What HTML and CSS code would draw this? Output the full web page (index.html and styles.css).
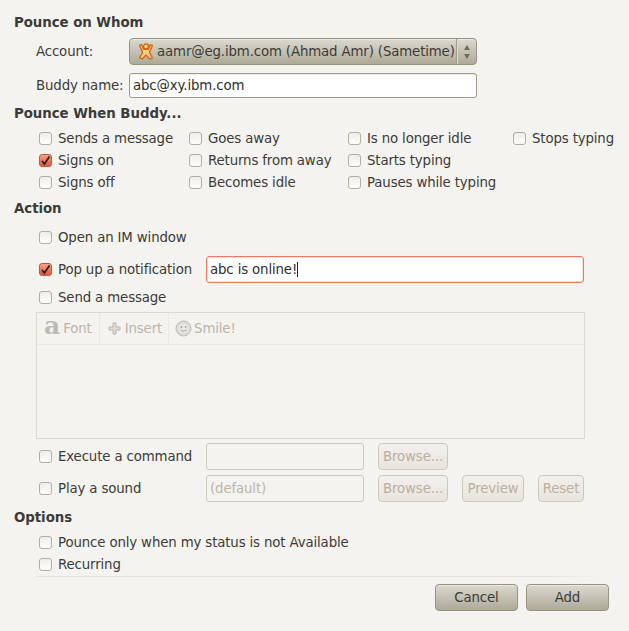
FILE: index.html
```html
<!DOCTYPE html>
<html lang="en">
<head>
    <meta charset="UTF-8">
    <title>New Buddy Pounce</title>
    <link rel="stylesheet" href="styles.css">
</head>
<body>
    <div class="dialog">
        <h2 class="heading first">Pounce on Whom</h2>
        <div class="whom">
            <span>Account:</span>
            <div class="combo btn">
                <svg class="proto" width="16" height="17" viewBox="0 0 16 17">
                    <circle cx="8" cy="3.4" r="2.4" fill="#fbd9a6" stroke="#d0680f" stroke-width="1.3"/>
                    <path d="M1.6 2.4 L3.6 1.6 L5.6 6.4 H10.4 L12.4 1.6 L14.4 2.4 L11.4 9.4 L14.4 15 L11.8 16 L8 12 L4.2 16 L1.6 15 L4.6 9.4 Z" fill="#fbc98a" stroke="#d0680f" stroke-width="1.3" stroke-linejoin="round"/>
                </svg>
                <span class="combo-text">aamr@eg.ibm.com (Ahmad Amr) (Sametime)</span>
                <span class="combo-arrows">
                    <svg width="6" height="16" viewBox="0 0 6 16">
                        <path d="M3 1 L6 6 H0 Z M0 10 H6 L3 15 Z" fill="#6f6c60"/>
                    </svg>
                </span>
            </div>
            <span>Buddy name:</span>
            <div class="entry buddy">abc@xy.ibm.com</div>
        </div>

        <h2 class="heading">Pounce When Buddy...</h2>
        <div class="when">
            <label class="check"><span class="box"></span>Sends a message</label>
            <label class="check"><span class="box"></span>Goes away</label>
            <label class="check"><span class="box"></span>Is no longer idle</label>
            <label class="check"><span class="box"></span>Stops typing</label>
            <label class="check"><span class="box on"><svg width="11" height="11" viewBox="0 0 11 11"><path d="M2 6 L4.4 9 L9.5 1.5" fill="none" stroke="#222" stroke-width="1.8"/></svg></span>Signs on</label>
            <label class="check"><span class="box"></span>Returns from away</label>
            <label class="check"><span class="box"></span>Starts typing</label>
            <span></span>
            <label class="check"><span class="box"></span>Signs off</label>
            <label class="check"><span class="box"></span>Becomes idle</label>
            <label class="check"><span class="box"></span>Pauses while typing</label>
        </div>

        <h2 class="heading action-head">Action</h2>
        <div class="action">
            <label class="check open-im"><span class="box"></span>Open an IM window</label>
            <div class="row popup">
                <label class="check wide"><span class="box on"><svg width="11" height="11" viewBox="0 0 11 11"><path d="M2 6 L4.4 9 L9.5 1.5" fill="none" stroke="#222" stroke-width="1.8"/></svg></span>Pop up a notification</label>
                <div class="entry focused">abc is online!<span class="caret"></span></div>
            </div>
            <label class="check send"><span class="box"></span>Send a message</label>
            <div class="editor">
                <div class="toolbar">
                    <span class="tool font-tool"><span class="font-icon">a</span>Font</span>
                    <span class="tool">
                        <svg width="13" height="13" viewBox="0 0 13 13"><path d="M5 1 H8 V5 H12 V8 H8 V12 H5 V8 H1 V5 H5 Z" fill="#dedbd4" stroke="#b9b6ae"/></svg>
                        Insert
                    </span>
                    <span class="tool smile">
                        <svg width="17" height="17" viewBox="0 0 17 17">
                            <circle cx="8.5" cy="8.5" r="7.5" fill="#dcdad5" stroke="#bdbbb5"/>
                            <circle cx="8.5" cy="8.5" r="5" fill="#e9e7e3"/>
                            <circle cx="6.4" cy="7" r="0.9" fill="#a9a7a1"/>
                            <circle cx="10.6" cy="7" r="0.9" fill="#a9a7a1"/>
                            <path d="M5.5 10 Q8.5 12.8 11.5 10" fill="none" stroke="#a9a7a1"/>
                        </svg>
                        Smile!
                    </span>
                </div>
            </div>
            <div class="row exec">
                <label class="check wide"><span class="box"></span>Execute a command</label>
                <div class="entry dim"></div>
                <span class="btn off browse">Browse...</span>
            </div>
            <div class="row sound">
                <label class="check wide"><span class="box"></span>Play a sound</label>
                <div class="entry dim">(default)</div>
                <span class="btn off browse">Browse...</span>
                <span class="btn off preview">Preview</span>
                <span class="btn off reset">Reset</span>
            </div>
        </div>

        <h2 class="heading">Options</h2>
        <div class="options">
            <label class="check"><span class="box"></span>Pounce only when my status is not Available</label>
            <label class="check"><span class="box"></span>Recurring</label>
        </div>

        <div class="rule"></div>
        <div class="footer">
            <span class="btn big">Cancel</span>
            <span class="btn big">Add</span>
        </div>
    </div>
</body>
</html>
```

FILE: styles.css
```css
html, body {
    margin: 0;
    height: 100%;
}
body {
    background: #f5f3ef;
    color: #3c3b37;
    font-family: "DejaVu Sans", sans-serif;
    font-size: 13.33px;
    letter-spacing: -0.14px;
    overflow: hidden;
}
.dialog {
    padding: 12px 0 0 14px;
}
.heading {
    margin: 5px 0 0;
    height: 20px;
    line-height: 22px;
    font-size: 13.33px;
    font-weight: bold;
    letter-spacing: -0.04px;
    color: #3c3b37;
}
.heading.first {
    margin-top: 0;
}
.whom {
    display: grid;
    grid-template-columns: 93px 348px;
    grid-template-rows: 27px 25px;
    row-gap: 8px;
    align-items: center;
    margin: 6px 0 0 22px;
}
.btn {
    box-sizing: border-box;
    border: 1px solid #98937f;
    border-radius: 4px;
    background: linear-gradient(#dbd8cf, #aeaa99);
    box-shadow: inset 0 1px 0 #e9e7e0;
    display: flex;
    align-items: center;
    justify-content: center;
}
.combo {
    height: 27px;
    justify-content: flex-start;
    padding-left: 8px;
}
.proto {
    flex: none;
}
.combo-text {
    margin-left: 3px;
    white-space: nowrap;
    flex: 1;
}
.combo-arrows {
    flex: none;
    width: 20px;
    height: 25px;
    box-sizing: border-box;
    border-left: 1px solid #a19d8b;
    box-shadow: inset 1px 0 0 #dcd9d0;
    display: flex;
    align-items: center;
    justify-content: center;
}
.entry {
    box-sizing: border-box;
    background: #fff;
    border: 1px solid #a09a8a;
    border-radius: 3px;
    padding-left: 3px;
    display: flex;
    align-items: center;
    color: #2f2e2a;
}
.buddy {
    height: 25px;
    box-shadow: inset 0 1px 0 #eeeeea;
}
.when {
    display: grid;
    grid-template-columns: 150px 159px 165px auto;
    grid-auto-rows: 22px;
    margin: 4px 0 0 25px;
}
.check {
    display: flex;
    align-items: center;
    white-space: nowrap;
    height: 22px;
}
.box {
    box-sizing: border-box;
    flex: none;
    width: 13px;
    height: 13px;
    margin-right: 6px;
    border: 1px solid #b3ae9f;
    border-radius: 3px;
    background: linear-gradient(#f0eeea, #fdfdfc);
    display: flex;
    align-items: center;
    justify-content: center;
}
.box.on {
    border-color: #c0583f;
    background: linear-gradient(#f8a089, #e8553a);
}
.action-head {
    margin-top: 5px;
}
.action {
    margin: 8px 0 0 25px;
}
.row {
    display: flex;
    align-items: center;
    height: 27px;
}
.wide {
    width: 167px;
    flex: none;
}
.popup {
    margin-top: 8px;
}
.send {
    margin-top: 3px;
}
.focused {
    width: 378px;
    height: 27px;
    border-color: #ec7a60;
    box-shadow: inset 0 0 0 1px #fbe0d8;
}
.caret {
    width: 1px;
    height: 15px;
    background: #222;
}
.editor {
    box-sizing: border-box;
    width: 549px;
    height: 127px;
    margin: 4px 0 4px -3px;
    border: 1px solid #ded9cf;
}
.toolbar {
    display: flex;
    height: 31px;
    border-bottom: 1px solid #ebe8e2;
}
.tool {
    display: flex;
    align-items: center;
    gap: 4px;
    padding: 0 6px 0 8px;
    color: #bcb5a9;
    border-right: 1px solid #ece9e3;
}
.font-tool {
    padding: 0 7px 0 7px;
    gap: 3px;
}
.font-icon {
    font-family: "DejaVu Serif", serif;
    font-weight: bold;
    font-size: 25px;
    line-height: 20px;
    margin-top: -6px;
    letter-spacing: 0;
    color: #bdbbb5;
}
.smile {
    border-right: 0;
    gap: 2px;
    padding-left: 6px;
}
.dim {
    width: 158px;
    height: 27px;
    background: #f5f3ef;
    border-color: #d0cabe;
    color: #bcb5a9;
}
.off {
    height: 27px;
    color: #bcb0a0;
    border-color: #cfc9bd;
    background: linear-gradient(#f3f1ed, #e7e4dd);
    box-shadow: none;
}
.browse {
    width: 70px;
    margin-left: 14px;
}
.preview {
    width: 62px;
    margin-left: 14px;
}
.reset {
    width: 46px;
    margin-left: 14px;
}
.sound {
    margin-top: 5px;
}
.options {
    margin: 4px 0 0 25px;
}
.rule {
    width: 570px;
    height: 1px;
    margin: 1px 0 0 22px;
    background: linear-gradient(to right, #e6e3dc 90%, #f5f3ef);
}
.footer {
    display: flex;
    justify-content: flex-end;
    gap: 8px;
    width: 595px;
    padding-top: 7px;
}
.big {
    width: 83px;
    height: 27px;
}
```
